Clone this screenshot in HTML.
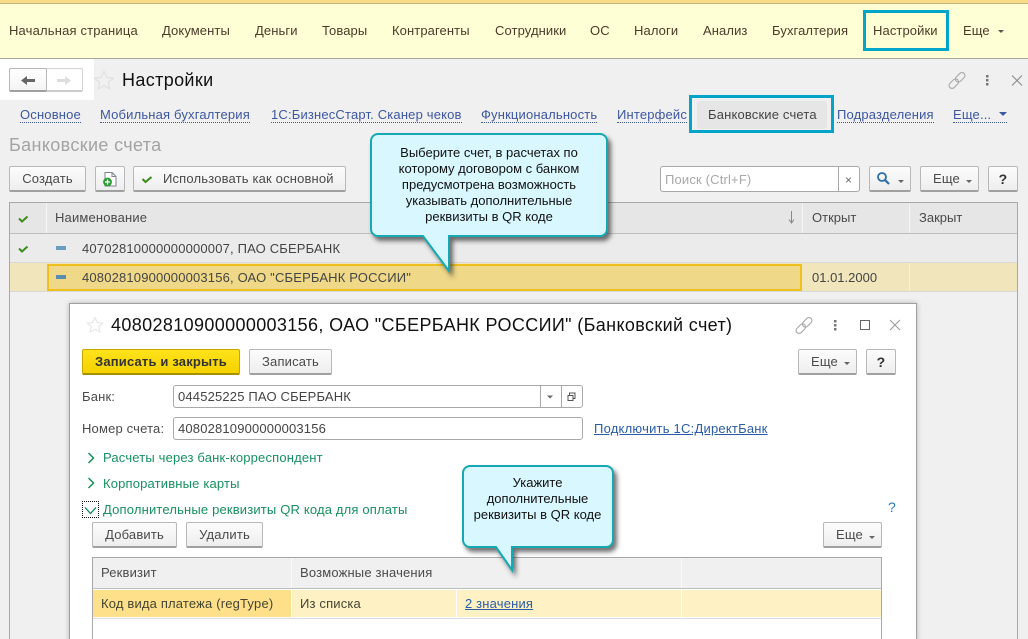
<!DOCTYPE html>
<html lang="ru"><head><meta charset="utf-8"><title>Настройки</title>
<style>
html,body{margin:0;padding:0;overflow:hidden;width:1028px;height:639px}
body{background:#f0f0f0;font-family:"Liberation Sans",sans-serif;font-size:13px;color:#4a4a4a;letter-spacing:.17px}
#r{position:absolute;left:0;top:0;width:1028px;height:639px;overflow:hidden;background:#f0f0f0}
.a{position:absolute}
.t{position:absolute;white-space:nowrap;line-height:16px;height:16px}
.m{color:#4b3a2a;top:23px;letter-spacing:.1px}
.l{color:#3d56a0;top:107px;border-bottom:1px dotted #3d56a0;height:15px}
.b{position:absolute;box-sizing:border-box;border:1px solid #b8b8b8;border-bottom:2px solid #a0a0a0;border-radius:2px;background:linear-gradient(#fcfcfc,#eeeeee);color:#4a4a4a;text-align:center;white-space:nowrap}
.g{color:#169060}
.i{position:absolute;box-sizing:border-box;border:1px solid #a8a8a8;border-radius:3px;background:#fff}
.c{text-align:center;color:#111;font-size:13px;letter-spacing:0;line-height:16px;position:absolute}
.h{font-size:18px;line-height:22px;height:22px;letter-spacing:.36px}
svg{position:absolute;left:0;top:0;overflow:visible}
</style></head><body><div id="r">
<div class="a" style="left:0;top:0;width:1028px;height:3px;background:#f8dc88"></div>
<div class="a" style="left:0;top:3px;width:1028px;height:1px;background:#c4b57c"></div>
<div class="a" style="left:0;top:4px;width:1028px;height:54px;background:#ffffd6"></div>
<div class="a" style="left:0;top:58px;width:1028px;height:1px;background:#aaa89a"></div>
<span class="t m" style="left:9px;letter-spacing:.17px">Начальная страница</span>
<span class="t m" style="left:162px">Документы</span>
<span class="t m" style="left:255px">Деньги</span>
<span class="t m" style="left:322px">Товары</span>
<span class="t m" style="left:392px">Контрагенты</span>
<span class="t m" style="left:495px">Сотрудники</span>
<span class="t m" style="left:590px">ОС</span>
<span class="t m" style="left:634px">Налоги</span>
<span class="t m" style="left:703px">Анализ</span>
<span class="t m" style="left:772px">Бухгалтерия</span>
<span class="t m" style="left:873px">Настройки</span>
<span class="t m" style="left:963px">Еще</span>
<div class="a" style="left:863px;top:10px;width:86px;height:41px;box-sizing:border-box;border:3px solid #00a5c8"></div>

<div class="a" style="left:0;top:59px;width:94px;height:41px;background:#fff"></div>
<div class="a" style="left:9px;top:68px;width:74px;height:24px;box-sizing:border-box;border:1px solid #d4d4d4;border-bottom:2px solid #cccccc;border-radius:2px;background:#fff"></div>
<div class="a" style="left:9px;top:68px;width:38px;height:24px;box-sizing:border-box;border:1px solid #b8b8b8;border-bottom:2px solid #a0a0a0;border-radius:2px;background:linear-gradient(#fff,#f4f4f4)"></div>

<svg width="1028" height="639" viewBox="0 0 1028 639">
<path d="M21 80.500l6-4.500v3h8v3h-8v3z" fill="#666"/>
<path d="M71 80.500l-6-4.500v3h-8v3h8v3z" fill="#dedede"/>
<path d="M104 71.500l2.800 6 6.400.7-4.800 4.300 1.400 6.400-5.800-3.300-5.800 3.300 1.400-6.400-4.800-4.300 6.400-.7z" fill="none" stroke="#e0e0e0" stroke-width="1.200"/>
<g fill="none" stroke="#a8a8a8" stroke-width="1.100" transform="rotate(-45 957 80.500)"><rect x="947" y="77.500" width="11" height="6" rx="3"/><rect x="956" y="77.500" width="11" height="6" rx="3"/></g>
<rect x="986" y="75" width="2.500" height="2.500" fill="#777"/><rect x="986" y="79" width="2.500" height="2.500" fill="#777"/><rect x="986" y="83" width="2.500" height="2.500" fill="#777"/>
<path d="M1012 75.500l10 10M1022 75.500l-10 10" stroke="#888" stroke-width="1" fill="none"/>
<path d="M998 30h6l-3 3z" fill="#555"/>
</svg>
<span class="t h" style="left:122px;top:69px;color:#111">Настройки</span>

<span class="t l" style="left:20px">Основное</span>
<span class="t l" style="left:100px">Мобильная бухгалтерия</span>
<span class="t l" style="left:271px">1С:БизнесСтарт. Сканер чеков</span>
<span class="t l" style="left:481px">Функциональность</span>
<span class="t l" style="left:617px">Интерфейс</span>
<div class="a" style="left:697px;top:101px;width:130px;height:28px;background:#e6e6e6;border-radius:3px"></div>
<span class="t" style="left:708px;top:107px;color:#444">Банковские счета</span>
<div class="a" style="left:689px;top:95px;width:145px;height:38px;box-sizing:border-box;border:3px solid #00a5c8"></div>
<span class="t l" style="left:837px">Подразделения</span>
<span class="t l" style="left:953px;width:54px">Еще...</span>
<svg width="1028" height="639"><path d="M999 112h8l-4 4z" fill="#3d56a0"/></svg>

<span class="t h" style="left:9px;top:134px;color:#a3a3a3">Банковские счета</span>

<div class="b" style="left:9px;top:166px;width:77px;height:26px;line-height:24px">Создать</div>
<div class="b" style="left:95px;top:166px;width:30px;height:26px"></div>
<div class="b" style="left:133px;top:166px;width:213px;height:26px;line-height:24px;text-align:left;padding-left:29px">Использовать как основной</div>
<svg width="1028" height="639">
<path d="M105 172.500h7l4 4v9.500h-11z" fill="#fff" stroke="#7a8590" stroke-width="1"/><path d="M112 172.500v4h4" fill="none" stroke="#7a8590"/>
<circle cx="107.500" cy="182" r="4.400" fill="#2e9a36"/><path d="M107.500 179.500v5M105 182h5" stroke="#fff" stroke-width="1.300"/>
<path d="M142.500 179l3 3 6-5" fill="none" stroke="#3c8c1e" stroke-width="2"/>
</svg>

<div class="i" style="left:660px;top:166px;width:200px;height:26px"></div>
<div class="a" style="left:838px;top:167px;width:1px;height:24px;background:#a8a8a8"></div>
<span class="t" style="left:665px;top:172px;color:#a8a8a8">Поиск (Ctrl+F)</span>
<span class="t" style="left:845px;top:172px;font-size:12px;color:#666">×</span>
<div class="b" style="left:869px;top:166px;width:42px;height:26px"></div>
<div class="b" style="left:920px;top:166px;width:59px;height:26px;line-height:24px;text-align:left;padding-left:12px">Еще</div>
<div class="b" style="left:988px;top:166px;width:30px;height:26px;line-height:24px;font-weight:bold;color:#333;font-size:14px">?</div>
<svg width="1028" height="639">
<circle cx="882" cy="177" r="4" fill="none" stroke="#2a6ea8" stroke-width="1.800"/><path d="M885 180l4 4" stroke="#2a6ea8" stroke-width="2.200"/>
<path d="M898 180h6l-3 3zM966 180h6l-3 3z" fill="#666"/>
</svg>

<div class="a" style="left:9px;top:202px;width:1009px;height:437px;box-sizing:border-box;border:1px solid #a8a8a8;border-bottom:0;background:#f0f0f0"></div>
<div class="a" style="left:10px;top:203px;width:1007px;height:30px;background:#e6e6e6"></div>
<div class="a" style="left:10px;top:233px;width:1007px;height:1px;background:#bdbdbd"></div>
<div class="a" style="left:46px;top:203px;width:1px;height:30px;background:#f5f5f5"></div>
<div class="a" style="left:802px;top:203px;width:1px;height:30px;background:#f5f5f5"></div>
<div class="a" style="left:909px;top:203px;width:1px;height:30px;background:#f5f5f5"></div>
<div class="a" style="left:10px;top:234px;width:1007px;height:28px;background:#ebebeb"></div>
<div class="a" style="left:10px;top:262px;width:1007px;height:1px;background:#d8d8d8"></div>
<div class="a" style="left:10px;top:263px;width:1007px;height:28px;background:#f1e5bc"></div>
<div class="a" style="left:10px;top:291px;width:1007px;height:1px;background:#d8d8d8"></div>
<div class="a" style="left:47px;top:264px;width:755px;height:27px;box-sizing:border-box;border:2px solid #efbf1e;background:#efd988"></div>
<div class="a" style="left:909px;top:263px;width:1px;height:28px;background:#f8f0d8"></div>
<span class="t" style="left:55px;top:210px;color:#4a4a4a">Наименование</span>
<span class="t" style="left:812px;top:210px;letter-spacing:0">Открыт</span>
<span class="t" style="left:919px;top:210px;letter-spacing:0">Закрыт</span>
<span class="t" style="left:82px;top:241px;color:#444">40702810000000000007, ПАО СБЕРБАНК</span>
<span class="t" style="left:82px;top:270px;color:#444">40802810900000003156, ОАО "СБЕРБАНК РОССИИ"</span>
<span class="t" style="left:812px;top:270px;color:#444;letter-spacing:0">01.01.2000</span>
<svg width="1028" height="639">
<path d="M19 218.500l3 3 5.500-5M19 248.500l3 3 5.500-5" fill="none" stroke="#3c8c1e" stroke-width="2"/>
<rect x="56" y="246" width="10" height="4" fill="#6a9cc0"/><rect x="56" y="275" width="10" height="4" fill="#5a8cb0"/>
<path d="M791.500 211v11M789 219.500l2.500 3.500 2.500-3.500" fill="none" stroke="#888" stroke-width="1"/>
</svg>

<div class="a" style="left:69px;top:303px;width:848px;height:340px;box-sizing:border-box;border:1px solid #a0a0a0;background:#fff;box-shadow:0 0 5px rgba(0,0,0,.25)"></div>
<svg width="1028" height="639">
<path d="M95 317.500l2.400 5 5.300.6-4 3.600 1.200 5.300-4.900-2.800-4.900 2.800 1.200-5.300-4-3.600 5.300-.6z" fill="none" stroke="#e6e6e6" stroke-width="1.100"/>
<g fill="none" stroke="#a8a8a8" stroke-width="1.100" transform="rotate(-45 804 325.500)"><rect x="794" y="322.500" width="11" height="6" rx="3"/><rect x="803" y="322.500" width="11" height="6" rx="3"/></g>
<rect x="834" y="320" width="2.500" height="2.500" fill="#777"/><rect x="834" y="324" width="2.500" height="2.500" fill="#777"/><rect x="834" y="328" width="2.500" height="2.500" fill="#777"/>
<rect x="860.500" y="320.500" width="9" height="9" fill="none" stroke="#666" stroke-width="1"/>
<path d="M890 320l10 10M900 320l-10 10" stroke="#999" stroke-width="1" fill="none"/>
</svg>
<span class="t h" style="left:111px;top:314px;color:#111">40802810900000003156, ОАО "СБЕРБАНК РОССИИ" (Банковский счет)</span>

<div class="b" style="left:82px;top:349px;width:158px;height:26px;line-height:24px;background:linear-gradient(#ffe21a,#f5d200);border-color:#c8a800;border-bottom-color:#a89000;color:#333;font-weight:bold">Записать и закрыть</div>
<div class="b" style="left:249px;top:349px;width:83px;height:26px;line-height:24px">Записать</div>
<div class="b" style="left:798px;top:349px;width:59px;height:26px;line-height:24px;text-align:left;padding-left:12px">Еще</div>
<div class="b" style="left:866px;top:349px;width:30px;height:26px;line-height:24px;font-weight:bold;color:#333;font-size:14px">?</div>
<span class="t" style="left:82px;top:389px">Банк:</span>
<div class="i" style="left:173px;top:385px;width:410px;height:23px"></div>
<div class="a" style="left:540px;top:386px;width:1px;height:21px;background:#a8a8a8"></div>
<div class="a" style="left:561px;top:386px;width:1px;height:21px;background:#a8a8a8"></div>
<span class="t" style="left:178px;top:389px;color:#444">044525225 ПАО СБЕРБАНК</span>
<span class="t" style="left:82px;top:421px">Номер счета:</span>
<div class="i" style="left:173px;top:417px;width:410px;height:23px"></div>
<span class="t" style="left:178px;top:421px;color:#444">40802810900000003156</span>
<span class="t" style="left:594px;top:421px;color:#2a5ca8;text-decoration:underline;letter-spacing:.22px">Подключить 1С:ДиректБанк</span>
<span class="t g" style="left:103px;top:450px">Расчеты через банк-корреспондент</span>
<span class="t g" style="left:103px;top:476px">Корпоративные карты</span>
<span class="t g" style="left:103px;top:502px">Дополнительные реквизиты QR кода для оплаты</span>
<span class="t" style="left:888px;top:499px;color:#2a78b8;font-size:14px">?</span>

<div class="b" style="left:92px;top:522px;width:85px;height:26px;line-height:24px">Добавить</div>
<div class="b" style="left:186px;top:522px;width:77px;height:26px;line-height:24px">Удалить</div>
<div class="b" style="left:823px;top:522px;width:59px;height:26px;line-height:24px;text-align:left;padding-left:12px">Еще</div>
<div class="a" style="left:82px;top:501px;width:17px;height:17px;box-sizing:border-box;border:1px dotted #111"></div>
<svg width="1028" height="639">
<path d="M547 395.500h6l-3 3zM844 362h6l-3 3zM869 536h6l-3 3z" fill="#666"/>
<path d="M569.500 395v-2h5.500v5.500h-2M568 395.500h5v5h-5z" fill="none" stroke="#555" stroke-width="1"/>
<path d="M88.500 453l5 5-5 5M88.500 478l5 5-5 5" fill="none" stroke="#169060" stroke-width="1.500"/>
<path d="M85 507.500l5.500 6 5.500-6" fill="none" stroke="#169060" stroke-width="1.300"/>
</svg>

<div class="a" style="left:92px;top:557px;width:790px;height:82px;box-sizing:border-box;border:1px solid #a8a8a8;border-bottom:0;background:#fff"></div>
<div class="a" style="left:93px;top:558px;width:788px;height:30px;background:#f0f0f0"></div>
<div class="a" style="left:93px;top:588px;width:788px;height:1px;background:#bdbdbd"></div>
<div class="a" style="left:291px;top:558px;width:1px;height:30px;background:#fafafa"></div>
<div class="a" style="left:681px;top:558px;width:1px;height:30px;background:#fafafa"></div>
<div class="a" style="left:93px;top:590px;width:198px;height:27px;background:#fee08a"></div>
<div class="a" style="left:292px;top:590px;width:589px;height:27px;background:#fef2c4"></div>
<div class="a" style="left:456px;top:590px;width:1px;height:27px;background:#fff"></div>
<div class="a" style="left:681px;top:590px;width:1px;height:27px;background:#fff"></div>
<div class="a" style="left:93px;top:618px;width:788px;height:1px;background:#dedede"></div>
<span class="t" style="left:101px;top:565px">Реквизит</span>
<span class="t" style="left:300px;top:565px">Возможные значения</span>
<span class="t" style="left:101px;top:596px;color:#443">Код вида платежа (regType)</span>
<span class="t" style="left:300px;top:596px;color:#443">Из списка</span>
<span class="t" style="left:465px;top:596px;color:#2a5ca8;text-decoration:underline">2 значения</span>

<svg width="1028" height="639">
<defs><filter id="s" x="-10%" y="-10%" width="125%" height="125%"><feDropShadow dx="3" dy="4" stdDeviation="2.500" flood-color="#333" flood-opacity=".7"/></filter></defs>
<path d="M378 134H600a7 7 0 0 1 7 7V229a7 7 0 0 1-7 7H449V271L423 236H378a7 7 0 0 1-7-7V141a7 7 0 0 1 7-7z" fill="#d9f7ff" stroke="#12a9b4" stroke-width="2" filter="url(#s)"/>
<path d="M470 466H606a7 7 0 0 1 7 7V540a7 7 0 0 1-7 7H512V570L496 547H470a7 7 0 0 1-7-7V473a7 7 0 0 1 7-7z" fill="#d9f7ff" stroke="#12a9b4" stroke-width="2" filter="url(#s)"/>
</svg>
<div class="c" style="left:371px;top:145px;width:236px">Выберите счет, в расчетах по<br>которому договором с банком<br>предусмотрена возможность<br>указывать дополнительные<br>реквизиты в QR коде</div>
<div class="c" style="left:462px;top:475px;width:151px">Укажите<br>дополнительные<br>реквизиты в QR коде</div>
</div></body></html>
